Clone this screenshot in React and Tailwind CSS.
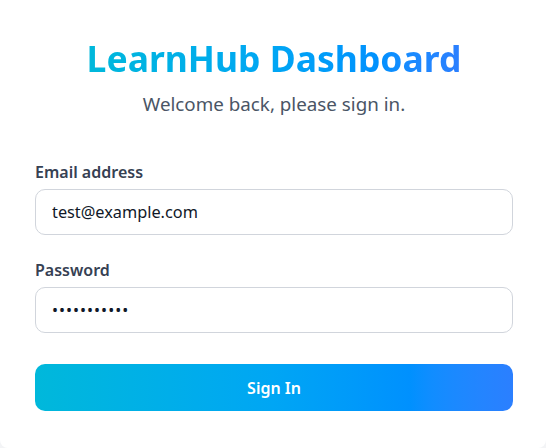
import React, { useState } from 'react';

const App = () => {
  const [email, setEmail] = useState('test@example.com');
  const [password, setPassword] = useState('password123');

  return (
    <div className="bg-gray-100 h-[448px] w-full font-['Noto_Sans',sans-serif]">
      <div className="bg-white h-full rounded-b-lg pl-[35px] pr-[33px] pt-[34px]">
        {/* Header */}
        <div className="text-center">
          <h1 className="text-[35.5px] leading-[48px] font-bold bg-gradient-to-r from-cyan-500 via-sky-500 to-blue-500 bg-clip-text text-transparent inline-block">
            LearnHub Dashboard
          </h1>
          <p className="mt-[8px] text-[18.8px] leading-[28px] text-gray-600">Welcome back, please sign in.</p>
        </div>

        <form className="mt-[42px]" onSubmit={(e) => e.preventDefault()}>
          <label className="block text-[16px] leading-[24px] font-semibold text-gray-700 mb-[5px]">Email address</label>
          <input
            type="email"
            value={email}
            onChange={(e) => setEmail(e.target.value)}
            className="w-full h-[46px] px-[16px] rounded-[10px] border border-gray-300 text-[16.3px] text-gray-900 outline-none"
          />

          <label className="block mt-[23px] text-[16px] leading-[24px] font-semibold text-gray-700 mb-[5px]">Password</label>
          <input
            type="password"
            value={password}
            onChange={(e) => setPassword(e.target.value)}
            className="w-full h-[46px] px-[16px] rounded-[10px] border border-gray-300 text-[16px] tracking-[1px] text-gray-900 outline-none"
          />

          <button
            type="submit"
            className="mt-[31px] w-full h-[47px] rounded-[10px] bg-gradient-to-r from-cyan-500 via-sky-500 to-blue-500 text-white text-[16px] font-semibold"
          >
            Sign In
          </button>
        </form>
      </div>
    </div>
  );
};

export default App;
